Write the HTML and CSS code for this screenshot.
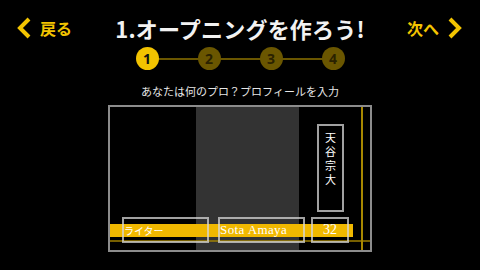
FILE: index.html
```html
<!DOCTYPE html>
<html lang="ja">
<head>
  <meta charset="UTF-8" />
  <meta name="viewport" content="width=device-width, initial-scale=1" />
  <title>オープニングを作ろう</title>
  <link rel="stylesheet" href="styles.css">
</head>
<body>
  <header class="topbar">
    <a class="nav back" href="#">
      <svg width="14" height="22" viewBox="0 0 14 22"><polyline points="12,2 3,11 12,20" /></svg>
      <span>戻る</span>
    </a>
    <h1>1.オープニングを作ろう!</h1>
    <a class="nav next" href="#">
      <span>次へ</span>
      <svg width="14" height="22" viewBox="0 0 14 22"><polyline points="2,2 11,11 2,20" /></svg>
    </a>
  </header>

  <ol class="steps">
    <li class="on">1</li>
    <li>2</li>
    <li>3</li>
    <li>4</li>
  </ol>

  <p class="lead">あなたは何のプロ？プロフィールを入力</p>

  <div class="preview">
    <div class="col"></div>
    <div class="col mid"></div>
    <div class="col right"></div>

    <div class="guide-v"></div>
    <div class="guide-h"></div>
    <div class="bar"></div>

    <div class="field job">ライター</div>
    <div class="field name">Sota Amaya</div>
    <div class="field age">32</div>
    <div class="field tate">天谷宗大</div>
  </div>
</body>
</html>
```

FILE: styles.css
```css
body { margin: 0; width: 480px; height: 270px; overflow: hidden; background: #000; color: #fff; font-family: "Noto Sans CJK JP", "Noto Sans", sans-serif; }

.topbar { display: grid; grid-template-columns: 1fr auto 1fr; align-items: center; height: 24px; padding: 16px 17px 0 17px; }
.topbar h1 { margin: 0; font-size: 22px; font-weight: 700; line-height: 24px; color: #f2f2f2; letter-spacing: 0.2px; }
.nav { display: flex; align-items: center; gap: 9px; color: #f3c400; text-decoration: none; font-size: 16px; font-weight: 700; line-height: 20px; }
.nav svg polyline { fill: none; stroke: #f3c400; stroke-width: 4; }
.next { justify-self: end; gap: 9px; margin-right: 1px; }

.steps { position: relative; display: flex; gap: 39px; width: 209px; margin: 7px auto 0 auto; padding: 0; list-style: none; }
.steps::before { content: ""; position: absolute; left: 11px; right: 11px; top: 11px; height: 2px; background: #6a5600; }
.steps li { position: relative; width: 23px; height: 23px; border-radius: 50%; background: #6a5600; color: #2a2200; font-family: "Noto Sans", sans-serif; font-weight: 700; font-size: 14px; line-height: 23px; text-align: center; }
.steps li.on { background: #f2c300; color: #111; }

.lead { margin: 14px 0 0 0; text-align: center; font-size: 11px; line-height: 14px; color: #e6e6e6; }

.preview { position: relative; display: flex; width: 260px; height: 143px; margin: 7px auto 0 auto; border: 2px solid #8c8c8c; }
.col { width: 86px; flex: none; background: #000; }
.col.mid { width: 103px; background: #333; }
.col.right { flex: 1; }

.guide-v { position: absolute; left: 251px; top: 0; bottom: 0; width: 2px; background: #a88800; }
.guide-h { position: absolute; left: 0; right: 0; top: 133px; height: 2px; background: rgba(168, 136, 0, 0.7); }
.bar { position: absolute; left: 0; top: 117px; width: 243px; height: 13px; background: #f0b800; }

.field { position: absolute; box-sizing: border-box; border: 2px solid rgba(215, 215, 215, 0.75); color: #fff; display: flex; align-items: center; }
.job { left: 12px; top: 110px; width: 87px; height: 26px; font-size: 10px; }
.name { left: 108px; top: 110px; width: 87px; height: 26px; font-family: "Liberation Serif", serif; font-size: 13px; letter-spacing: 0.4px; }
.age { left: 201px; top: 110px; width: 38px; height: 26px; justify-content: center; font-family: "Liberation Serif", serif; font-size: 14px; }
.tate { left: 207px; top: 17px; width: 27px; height: 88px; writing-mode: vertical-rl; justify-content: flex-start; align-items: center; padding-top: 6px; font-size: 11px; letter-spacing: 3px; }
```
